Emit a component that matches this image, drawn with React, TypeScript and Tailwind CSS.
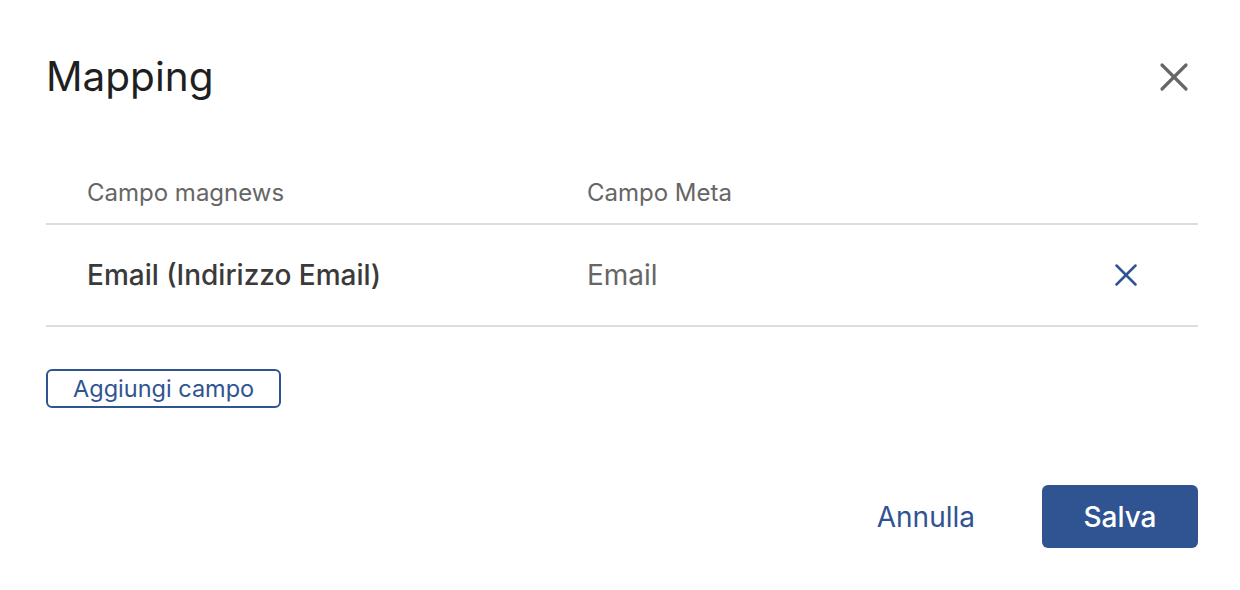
import React from 'react';
import { X } from 'lucide-react';

const rows = [{ magnews: 'Email (Indirizzo Email)', meta: 'Email' }];

export default function App() {
  return (
    <div className="w-[1240px] h-[590px] bg-white font-['Inter','Noto_Sans',sans-serif] pl-[46px] pr-[42px] pt-[50px]">
      {/* Header */}
      <div className="flex items-center justify-between h-[54px]">
        <h1 className="text-[40.5px] leading-none text-[#1f1f1f]">Mapping</h1>
        <button className="text-[#666666]">
          <X className="w-[48px] h-[48px]" strokeWidth={1.6} />
        </button>
      </div>

      {/* Table */}
      <div className="mt-[69px]">
        <div className="flex items-center h-[52px] pb-[10px] border-b-2 border-[#dddddd] text-[24px] text-[#666666] pl-[41px]">
          <div className="w-[500px]">Campo magnews</div>
          <div>Campo Meta</div>
        </div>
        {rows.map((r) => (
          <div key={r.magnews} className="flex items-center h-[102px] border-b-2 border-[#dddddd] pl-[41px] pr-[53px] text-[28px]">
            <div className="w-[500px] font-medium text-[#3a3a3a]">{r.magnews}</div>
            <div className="flex-1 text-[#666666]">{r.meta}</div>
            <button className="text-[#2f5491]">
              <X className="w-[38px] h-[38px]" strokeWidth={1.6} />
            </button>
          </div>
        ))}
      </div>

      <button className="mt-[42px] h-[39px] px-[25px] border-2 border-[#2f5491] rounded-[6px] text-[23.5px] text-[#2f5491] leading-none">
        Aggiungi campo
      </button>

      {/* Footer */}
      <div className="flex justify-end items-center gap-[67px] mt-[77px]">
        <button className="text-[28px] text-[#2f5491]">Annulla</button>
        <button className="w-[156px] h-[63px] rounded-[6px] bg-[#2f5491] text-white text-[28px] font-medium">Salva</button>
      </div>
    </div>
  );
}
